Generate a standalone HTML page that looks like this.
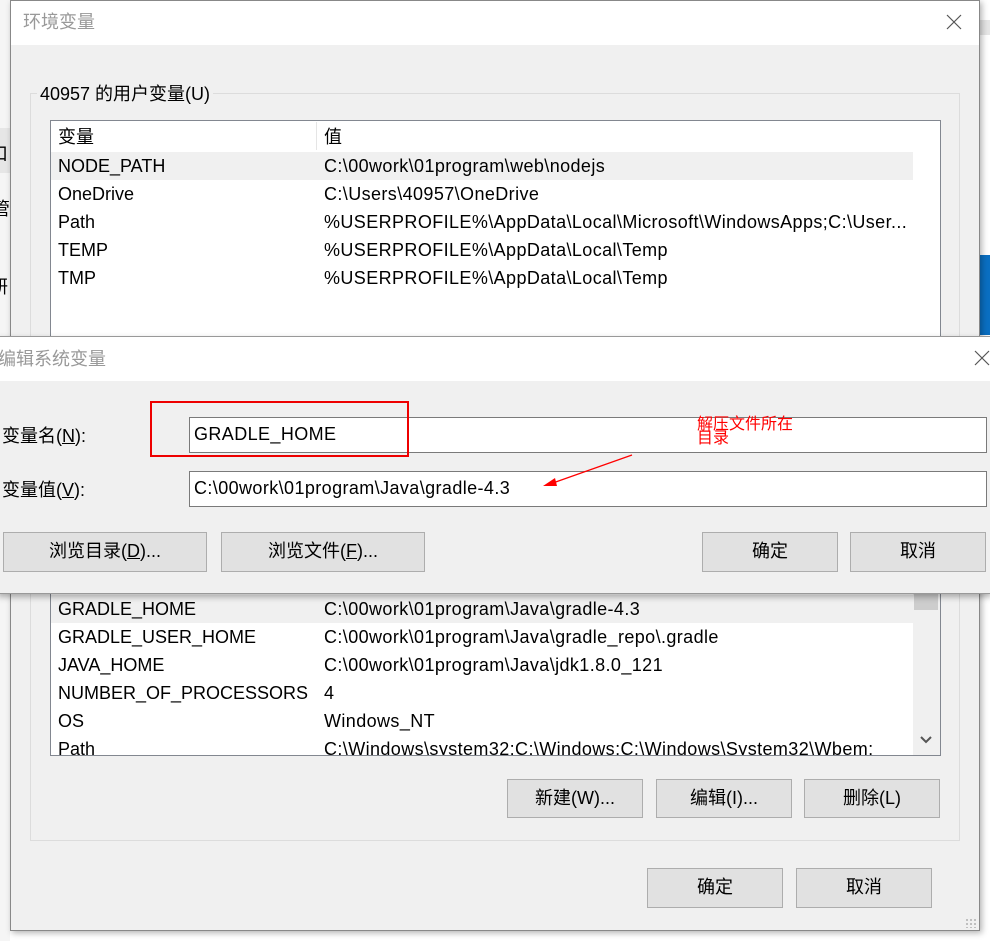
<!DOCTYPE html>
<html><head><meta charset="utf-8"><style>
*{margin:0;padding:0;box-sizing:border-box}
body{width:990px;height:941px;position:relative;overflow:hidden;background:#fff;font-family:"Liberation Sans","Noto Sans CJK SC",sans-serif;font-size:18px;color:#000}
.a{position:absolute}
.t{position:absolute;white-space:nowrap;line-height:22px}
.w{letter-spacing:0.4px}
.btn{position:absolute;background:#e1e1e1;border:1px solid #adadad;text-align:center;font-size:18px;line-height:36px}
.inp{position:absolute;background:#fff;border:1px solid #7a7a7a;padding-left:4px;line-height:32px;font-size:18px}
u{text-decoration:underline}
</style></head><body>
<div class="a" style="left:0;top:0;width:10px;height:941px;background:#f5f5f5"></div>
<div class="a" style="left:0;top:128px;width:10px;height:45px;background:#e6e6e6"></div>
<div class="t" style="left:-10px;top:143px;font-size:18px">口</div>
<div class="t" style="left:-8px;top:198px;font-size:18px">管</div>
<div class="t" style="left:-10px;top:276px;font-size:18px">研</div>
<div class="a" style="left:980px;top:255px;width:10px;height:80px;background:#0a6fc2"></div>
<div class="a" style="left:980px;top:20px;width:10px;height:15px;background:#e6e6e6"></div>
<div class="a" style="left:10px;top:0;width:970px;height:931px;background:#f0f0f0;border:1px solid #888;box-shadow:2px 2px 6px rgba(0,0,0,.3)"></div>
<div class="a" style="left:11px;top:1px;width:968px;height:44px;background:#fff"></div>
<div class="t" style="left:23px;top:11px;color:#999">环境变量</div>
<svg class="a" style="left:946px;top:14px" width="16" height="16"><path d="M1 1L15 15M15 1L1 15" stroke="#555" stroke-width="1.2"/></svg>
<div class="a" style="left:30px;top:93px;width:930px;height:748px;border:1px solid #dcdcdc"></div>
<div class="t" style="left:37px;top:83px;background:#f0f0f0;padding:0 3px">40957 的用户变量(U)</div>
<div class="a" style="left:50px;top:120px;width:891px;height:230px;background:#fff;border:1px solid #828790"></div>
<div class="a" style="left:316px;top:122px;width:1px;height:28px;background:#e5e5e5"></div>
<div class="a" style="left:51px;top:152px;width:862px;height:28px;background:#f0f0f0"></div>
<div class="t" style="left:58px;top:126px">变量</div><div class="t" style="left:324px;top:126px">值</div>
<div class="t" style="left:58px;top:155px">NODE_PATH</div><div class="t w" style="left:324px;top:155px">C:\00work\01program\web\nodejs</div>
<div class="t" style="left:58px;top:183px">OneDrive</div><div class="t w" style="left:324px;top:183px">C:\Users\40957\OneDrive</div>
<div class="t" style="left:58px;top:211px">Path</div><div class="t w" style="left:324px;top:211px">%USERPROFILE%\AppData\Local\Microsoft\WindowsApps;C:\User...</div>
<div class="t" style="left:58px;top:239px">TEMP</div><div class="t w" style="left:324px;top:239px">%USERPROFILE%\AppData\Local\Temp</div>
<div class="t" style="left:58px;top:267px">TMP</div><div class="t w" style="left:324px;top:267px">%USERPROFILE%\AppData\Local\Temp</div>
<div class="a" style="left:50px;top:580px;width:891px;height:176px;background:#fff;border:1px solid #828790"></div>
<div class="a" style="left:913px;top:581px;width:27px;height:174px;background:#f0f0f0"></div>
<div class="a" style="left:914px;top:594px;width:24px;height:16px;background:#cdcdcd"></div>
<svg class="a" style="left:920px;top:736px" width="12" height="8"><path d="M1 1L6 6L11 1" stroke="#555" stroke-width="2" fill="none"/></svg>
<div class="a" style="left:51px;top:595px;width:862px;height:28px;background:#f0f0f0"></div>
<div style="position:absolute;left:51px;top:581px;width:862px;height:174px;overflow:hidden">
<div class="t" style="left:7px;top:17px">GRADLE_HOME</div><div class="t w" style="left:273px;top:17px">C:\00work\01program\Java\gradle-4.3</div>
<div class="t" style="left:7px;top:45px">GRADLE_USER_HOME</div><div class="t w" style="left:273px;top:45px">C:\00work\01program\Java\gradle_repo\.gradle</div>
<div class="t" style="left:7px;top:73px">JAVA_HOME</div><div class="t w" style="left:273px;top:73px">C:\00work\01program\Java\jdk1.8.0_121</div>
<div class="t" style="left:7px;top:101px">NUMBER_OF_PROCESSORS</div><div class="t" style="left:273px;top:101px">4</div>
<div class="t" style="left:7px;top:129px">OS</div><div class="t w" style="left:273px;top:129px">Windows_NT</div>
<div class="t" style="left:7px;top:157px">Path</div><div class="t w" style="left:273px;top:157px">C:\Windows\system32;C:\Windows;C:\Windows\System32\Wbem;</div>
</div>
<div class="btn" style="left:507px;top:779px;width:136px;height:39px">新建(W)...</div>
<div class="btn" style="left:656px;top:779px;width:136px;height:39px">编辑(I)...</div>
<div class="btn" style="left:804px;top:779px;width:136px;height:39px">删除(L)</div>
<div class="btn" style="left:647px;top:868px;width:136px;height:40px">确定</div>
<div class="btn" style="left:796px;top:868px;width:136px;height:40px">取消</div>
<div class="a" style="left:965px;top:918px;width:12px;height:10px;background:radial-gradient(#bbb 1px,transparent 1.2px) 0 0/4px 4px"></div>
<div class="a" style="left:-2px;top:336px;width:994px;height:258px;background:#f0f0f0;border:1px solid #999;box-shadow:0 3px 6px rgba(0,0,0,.3)"></div>
<div class="a" style="left:0;top:337px;width:990px;height:44px;background:#fff"></div>
<div class="t" style="left:-2px;top:348px;color:#999">编辑系统变量</div>
<svg class="a" style="left:974px;top:350px" width="16" height="16"><path d="M1 1L15 15M15 1L1 15" stroke="#555" stroke-width="1.2"/></svg>
<div class="t" style="left:2px;top:425px">变量名(<u>N</u>):</div>
<div class="t" style="left:2px;top:479px">变量值(<u>V</u>):</div>
<div class="inp w" style="left:189px;top:417px;width:798px;height:36px">GRADLE_HOME</div>
<div class="inp w" style="left:189px;top:471px;width:798px;height:36px">C:\00work\01program\Java\gradle-4.3</div>
<div class="a" style="left:150px;top:401px;width:259px;height:56px;border:2px solid #e00"></div>
<div class="t" style="left:697px;top:418px;color:#f00;font-size:16px;line-height:14px">解压文件所在<br>目录</div>
<svg class="a" style="left:0;top:0" width="990" height="941"><line x1="632" y1="455" x2="550" y2="484" stroke="#f00" stroke-width="1.2"/><polygon points="543,486 555,478 557,486" fill="#f00"/></svg>
<div class="btn" style="left:3px;top:532px;width:204px;height:40px">浏览目录(<u>D</u>)...</div>
<div class="btn" style="left:221px;top:532px;width:204px;height:40px">浏览文件(<u>F</u>)...</div>
<div class="btn" style="left:702px;top:532px;width:136px;height:40px">确定</div>
<div class="btn" style="left:850px;top:532px;width:136px;height:40px">取消</div>
</body></html>
